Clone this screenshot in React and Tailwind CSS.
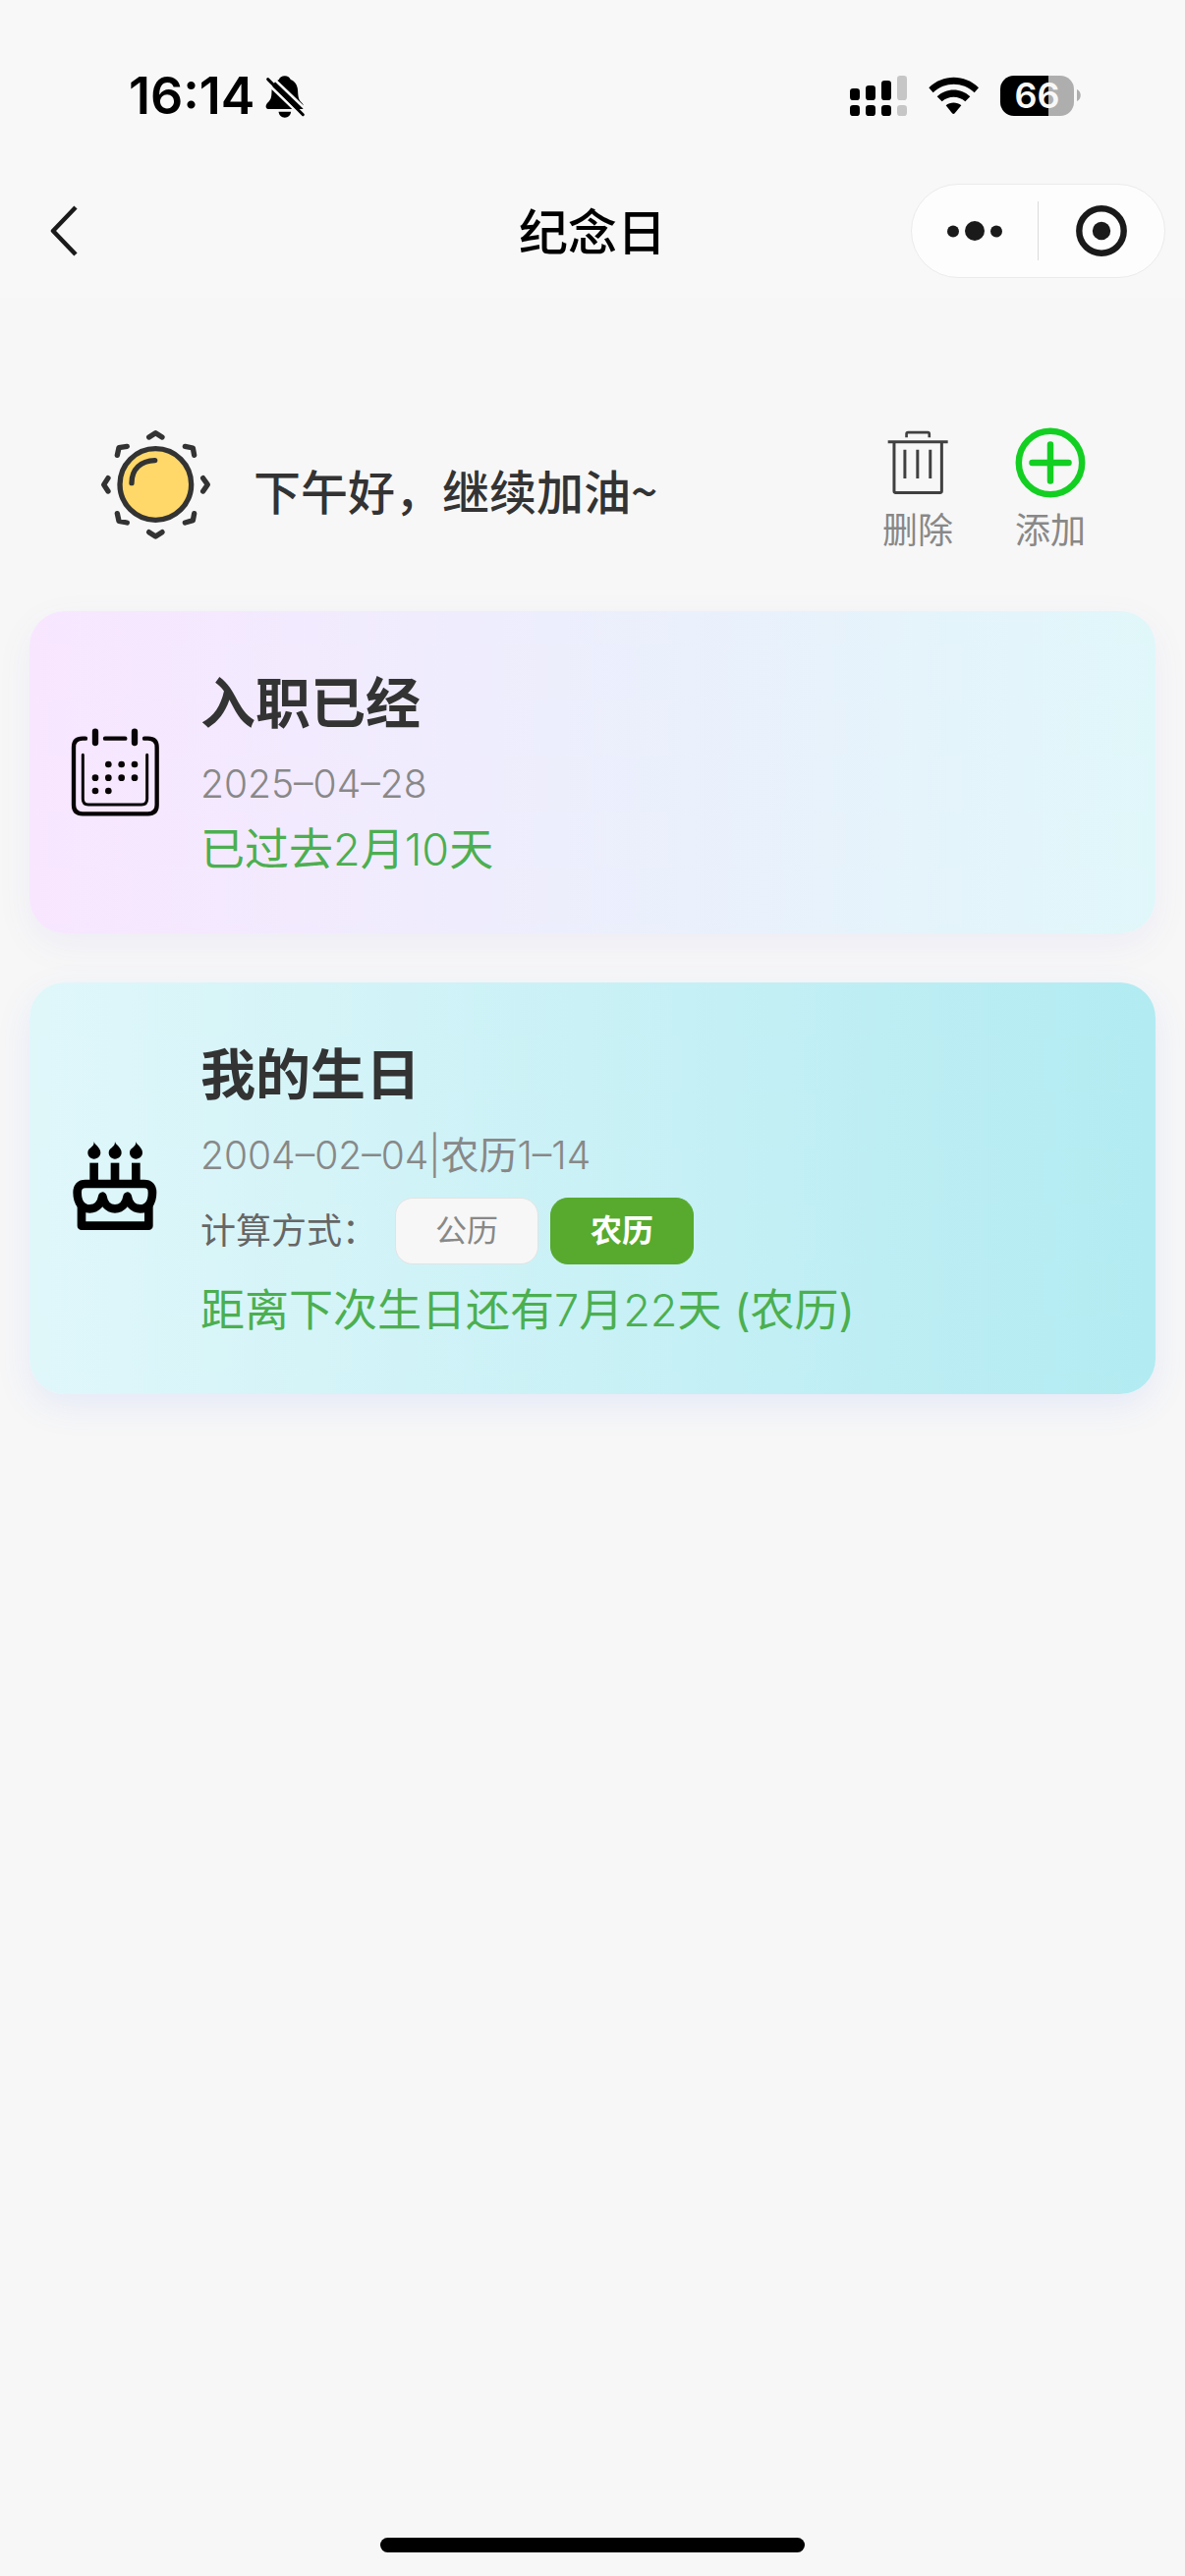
import React, { useState } from "react";

const TEXT_FONT = "font-['Inter','Noto_Sans_CJK_SC',sans-serif]";

function BellOffIcon() {
  return (
    <svg viewBox="510 78 124 134" className="h-[45px] w-[41px]" aria-hidden="true">
      <path
        d="M570 81c9 0 15 5 18 11 14 6 21 18 22 33 1 20 2 28 12 38 5 5 7 10 6 15l-2 5H521c-8 0-11-7-8-13 3-8 15-12 16-30 1-10 0-18 3-26 3-11 10-18 20-22 3-7 9-11 18-11z"
        fill="#000"
      />
      <path d="M551 191h38c-1 11-9 18-19 18s-18-7-19-18z" fill="#000" />
      <path d="M524 78l112 107" stroke="#f8f8f8" strokeWidth="8" />
      <path d="M510 98l100 96" stroke="#f8f8f8" strokeWidth="8" />
      <path d="M518 91l108 109" stroke="#000" strokeWidth="9" strokeLinecap="round" />
    </svg>
  );
}

function SignalIcon() {
  return (
    <svg viewBox="75 81 174 123" className="h-[41px] w-[58px]" aria-hidden="true">
      <g fill="#000">
        <rect x="75" y="120" width="30" height="36" rx="10" />
        <rect x="123" y="111" width="30" height="45" rx="10" />
        <rect x="171" y="96" width="30" height="60" rx="10" />
        <rect x="75" y="171" width="30" height="33" rx="10" />
        <rect x="123" y="171" width="30" height="33" rx="10" />
        <rect x="171" y="171" width="30" height="33" rx="10" />
      </g>
      <g fill="#c6c6c6">
        <rect x="219" y="81" width="30" height="75" rx="10" />
        <rect x="219" y="171" width="30" height="33" rx="10" />
      </g>
    </svg>
  );
}

function WifiIcon() {
  return (
    <svg viewBox="315 84 153 117" className="h-[39px] w-[51px]" aria-hidden="true">
      <path d="M316 118c42-42 110-42 152 0l-13 15c-36-34-90-34-126 0z" fill="#000" />
      <path d="M341 145c28-27 73-27 101 0l-15 15c-20-18-51-18-71 0z" fill="#000" />
      <path d="M368 172c13-11 34-11 47 0l-20 24q-4 4-8 0z" fill="#000" />
    </svg>
  );
}

function Battery() {
  return (
    <div className="flex items-center gap-[3px]">
      <div className="flex h-[41px] w-[75px] items-center justify-center rounded-[14px] bg-[linear-gradient(90deg,#000_66%,#aeaeae_66%)] text-[36px] leading-[43px] font-semibold text-[#f8f8f8]">
        66
      </div>
      <svg viewBox="0 0 4 12" className="h-3 w-1" aria-hidden="true">
        <path d="M0 0c5 2 5 10 0 12z" fill="#aeaeae" />
      </svg>
    </div>
  );
}

function StatusBar() {
  return (
    <div className="flex h-[187px] items-start justify-between pt-[72px] pr-[106px] pl-[131px]">
      <div className="flex items-center gap-[11px]">
        <span className="text-[52px] leading-[52px] font-semibold text-black">16:14</span>
        <BellOffIcon />
      </div>
      <div className="flex h-[50px] items-center gap-[22px]">
        <SignalIcon />
        <WifiIcon />
        <Battery />
      </div>
    </div>
  );
}

function NavBar() {
  return (
    <div className="grid h-[116px] grid-cols-[1fr_auto_1fr] items-start px-5">
      <button type="button" aria-label="返回" className="ml-[26px] flex h-24 w-9 items-center">
        <svg viewBox="0 0 36 52" className="h-[52px] w-9" aria-hidden="true">
          <path d="M31 2L8 26l23 24" fill="none" stroke="#1a1a1a" strokeWidth="4.500" strokeLinejoin="round" />
        </svg>
      </button>
      <h1 className="text-[50px] leading-[100px] font-medium text-black">纪念日</h1>
      <div className="flex h-24 w-[259px] items-center justify-self-end rounded-full border border-[#ebebeb] bg-[#fdfdfd]">
        <button type="button" aria-label="更多" className="flex flex-1 justify-center">
          <svg viewBox="0 0 56 20" className="h-5 w-14" aria-hidden="true">
            <circle cx="6" cy="10.500" r="6" fill="#1a1a1a" />
            <circle cx="28" cy="10" r="10" fill="#1a1a1a" />
            <circle cx="50" cy="10.500" r="6" fill="#1a1a1a" />
          </svg>
        </button>
        <div className="h-[60px] w-px bg-[#dcdcdc]" />
        <button type="button" aria-label="关闭" className="flex flex-1 justify-center">
          <svg viewBox="0 0 52 52" className="size-[52px]" aria-hidden="true">
            <circle cx="26" cy="26" r="22.700" fill="none" stroke="#1a1a1a" strokeWidth="6.400" />
            <circle cx="26" cy="26" r="9.200" fill="#1a1a1a" />
          </svg>
        </button>
      </div>
    </div>
  );
}

function SunIcon() {
  return (
    <svg viewBox="36 36 339 339" className="size-[113px]" aria-hidden="true">
      <circle cx="205" cy="204" r="109" fill="#ffd869" stroke="#333" strokeWidth="16" />
      <g fill="none" stroke="#333" strokeWidth="16" strokeLinecap="round" strokeLinejoin="round">
        <path d="M132 200c0-43 28-68 71-69" />
        <path d="M185 60l20-13 20 13M185 350l20 13 20-13" />
        <path d="M60 185l-13 20 13 20M350 185l14 20-14 20" />
        <path d="M88 115l5-23 25-4M295 88l24 5 4 22M88 293l5 23 25 5M295 321l24-7 4-21" />
      </g>
    </svg>
  );
}

function TrashIcon() {
  return (
    <svg viewBox="130 74 187 216" className="h-[72px] w-[62px]" aria-hidden="true">
      <g fill="none" stroke="#404040" strokeWidth="9">
        <path d="M132 118h184" />
        <path d="M189 104v-10q0-5 5-5h60q5 0 5 5v10" strokeWidth="8" />
        <path d="M151 122v147q0 5 5 5h136q5 0 5-5V122" />
        <path d="M184 142v88M223 142v88M262 142v88" />
      </g>
    </svg>
  );
}

function AddIcon() {
  return (
    <svg viewBox="0 0 72 72" className="size-[72px]" aria-hidden="true">
      <g fill="none" stroke="#13cf22" strokeWidth="6.500" strokeLinecap="round">
        <circle cx="36" cy="36" r="32.200" />
        <path d="M36 17.500v37M17.500 36h37" />
      </g>
    </svg>
  );
}

function CalendarIcon() {
  const dots = [
    [151, 144], [191, 144], [231, 144],
    [111, 185], [151, 185], [191, 185], [231, 185],
    [111, 225], [151, 225],
  ];
  return (
    <svg viewBox="36 30 270 276" className="h-[92px] w-[90px] shrink-0" aria-hidden="true">
      <g fill="none" stroke="#080304" strokeLinecap="round">
        <path d="M81 65H72q-27 0-27 27V268q0 27 27 27H272q27 0 27-27V92q0-27-27-27H261" strokeWidth="13" />
        <path d="M141 65h61" strokeWidth="13" />
        <path d="M111 44v34M231 44v34" strokeWidth="19" />
        <path d="M73 115V250q0 17 17 17H252q17 0 17-17V115" strokeWidth="9" />
      </g>
      {dots.map(([x, y]) => (
        <circle key={`${x}-${y}`} cx={x} cy={y} r="10" fill="#080304" />
      ))}
    </svg>
  );
}

function CakeIcon() {
  return (
    <svg viewBox="66 62 270 294" className="h-[98px] w-[90px] shrink-0" aria-hidden="true">
      {[0, 64, 128].map((x) => (
        <g key={x} transform={`translate(${x} 0)`}>
          <path d="M137 65c2 10 20 17 20 34 0 11-9 19-20 19s-19-8-19-19c0-17 20-15 19-34z" />
          <rect x="124" y="130" width="26" height="56" />
        </g>
      ))}
      <path
        d="M111 194H290Q315 194 315 220C315 252 300 270 278 270C254 270 242 250 239 232C236 250 224 270 201 270C178 270 166 250 163 232C160 250 148 270 124 270C102 270 86 252 86 220Q86 194 111 194z"
        fill="none"
        stroke="#000"
        strokeWidth="26"
        strokeLinejoin="round"
      />
      <path d="M99 255V322H304V255" fill="none" stroke="#000" strokeWidth="26" strokeLinejoin="round" />
    </svg>
  );
}

function GreetingBar() {
  return (
    <section className="flex items-start justify-between pt-[132px] pr-[101px] pb-12 pl-[102px]">
      <div className="flex items-center gap-[43px] pt-[2px]">
        <SunIcon />
        <p className="pt-2 font-['Noto_Sans_CJK_SC',sans-serif] text-[48px] leading-[70px] font-medium text-[#333]">
          下午好，继续加油~
        </p>
      </div>
      <div className="flex gap-[63px]">
        <button type="button" className="flex flex-col items-center text-[36px] leading-[67px] text-[#888]">
          <TrashIcon />
          <span>删除</span>
        </button>
        <button type="button" className="flex flex-col items-center text-[36px] leading-[67px] text-[#888]">
          <AddIcon />
          <span>添加</span>
        </button>
      </div>
    </section>
  );
}

// Figures are set one weight lighter than the Chinese characters around them.
function MixedText({ text }) {
  return text.split(/([0-9–|]+)/).map((part, i) =>
    i % 2 === 1 ? (
      <span key={i} className="font-light">
        {part}
      </span>
    ) : (
      part
    )
  );
}

function CalendarToggle() {
  const [mode, setMode] = useState("农历");
  return (
    <div className="mt-[17px] flex items-center" role="group" aria-label="计算方式">
      <span className="text-[36px] leading-[52px] text-[#666]">计算方式：</span>
      <div className="ml-[18px] flex gap-3">
        {["公历", "农历"].map((name) => (
          <button
            key={name}
            type="button"
            aria-pressed={mode === name}
            onClick={() => setMode(name)}
            className={
              mode === name
                ? "h-[68px] w-[146px] rounded-[18px] border border-[#57aa2e] bg-[#57aa2e] text-[32px] font-semibold text-white"
                : "h-[68px] w-[146px] rounded-[18px] border border-[#e3e3e3] bg-[#f7f7f7] text-[32px] text-[#888]"
            }
          >
            {name}
          </button>
        ))}
      </div>
    </div>
  );
}

function EventCard({ icon, title, date, status, tone, children }) {
  return (
    <article className={`flex items-center gap-[42px] rounded-[36px] px-[42px] py-[53px] ${tone}`}>
      {icon}
      <div className="min-w-0 flex-1">
        <h2 className="text-[56px] leading-[82px] font-semibold text-[#333]">{title}</h2>
        <p className="mt-[15px] text-[39px] leading-[52px] text-[#888]">
          <MixedText text={date} />
        </p>
        {children}
        <p className={`text-[45px] leading-[64px] text-[#4caf50] ${children ? "mt-[15px]" : "mt-[9px]"}`}>
          <MixedText text={status} />
        </p>
      </div>
    </article>
  );
}

export default function App() {
  return (
    <div className={`flex min-h-screen flex-col bg-[#f7f7f7] ${TEXT_FONT}`}>
      <header className="bg-[#f8f8f8]">
        <StatusBar />
        <NavBar />
      </header>
      <main className="flex-1">
        <GreetingBar />
        <div className="flex flex-col gap-[50px] px-[30px]">
          <EventCard
            icon={<CalendarIcon />}
            title="入职已经"
            date="2025–04–28"
            status="已过去2月10天"
            tone="bg-[linear-gradient(90deg,#f8e6ff,#e0f7fa)] shadow-[0_12px_36px_rgba(120,100,220,0.07)]"
          />
          <EventCard
            icon={<CakeIcon />}
            title="我的生日"
            date="2004–02–04|农历1–14"
            status="距离下次生日还有7月22天 (农历)"
            tone="bg-[linear-gradient(90deg,#e0f7fa,#b2ebf2)] shadow-[0_12px_36px_rgba(80,120,255,0.1)]"
          >
            <CalendarToggle />
          </EventCard>
        </div>
      </main>
      <footer className="flex justify-center pb-6">
        <div className="h-[15px] w-[432px] rounded-full bg-black" />
      </footer>
    </div>
  );
}
